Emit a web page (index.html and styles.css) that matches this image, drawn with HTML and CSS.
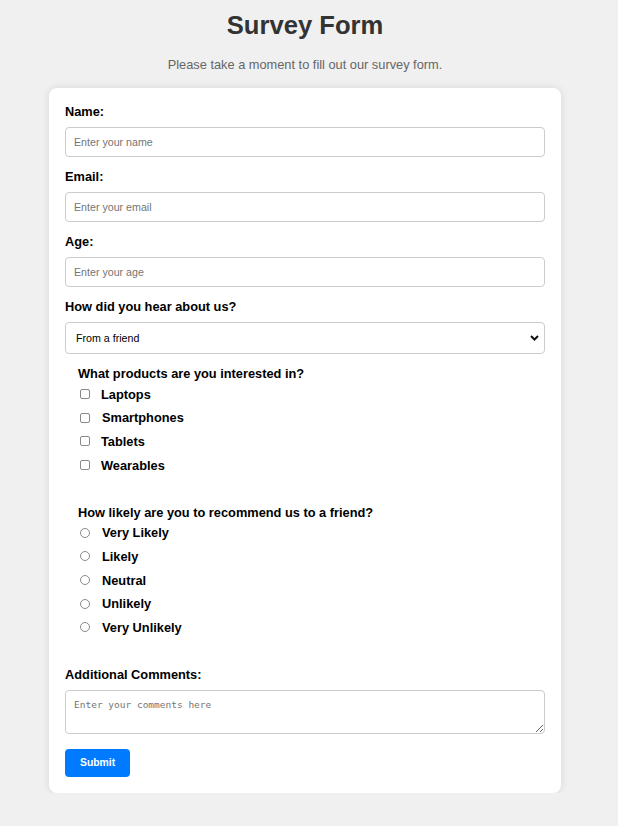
FILE: index.html
```html
<!DOCTYPE html>
<html lang="en">
<head>
<meta charset="utf-8">
<title>Survey Form</title>
<link rel="stylesheet" href="styles.css">
</head>
<body>
<div class="page">
  <h1 class="title">Survey Form</h1>
  <p class="subtitle">Please take a moment to fill out our survey form.</p>
  <form class="card">
    <label class="field-label" for="name">Name:</label>
    <input class="text-input" id="name" type="text" placeholder="Enter your name">

    <label class="field-label" for="email">Email:</label>
    <input class="text-input" id="email" type="email" placeholder="Enter your email">

    <label class="field-label" for="age">Age:</label>
    <input class="text-input" id="age" type="number" placeholder="Enter your age">

    <label class="field-label" for="source">How did you hear about us?</label>
    <div class="select-wrap">
      <select class="select" id="source">
        <option>From a friend</option>
        <option>Social media</option>
        <option>Advertisement</option>
      </select>
      <svg class="chevron" width="9" height="6" viewBox="0 0 9 6"><path d="M1 1 L4.5 4.5 L8 1" fill="none" stroke="#111" stroke-width="2"/></svg>
    </div>

    <div class="group">
      <div class="group-title">What products are you interested in?</div>
      <div class="options">
        <label class="option"><input type="checkbox" class="check"><span class="option-text">Laptops</span></label>
        <label class="option"><input type="checkbox" class="check"><span class="option-text wide">Smartphones</span></label>
        <label class="option"><input type="checkbox" class="check"><span class="option-text">Tablets</span></label>
        <label class="option"><input type="checkbox" class="check"><span class="option-text">Wearables</span></label>
      </div>
    </div>

    <div class="group">
      <div class="group-title">How likely are you to recommend us to a friend?</div>
      <div class="options">
        <label class="option"><input type="radio" name="rec" class="radio"><span class="option-text wide">Very Likely</span></label>
        <label class="option"><input type="radio" name="rec" class="radio"><span class="option-text wide">Likely</span></label>
        <label class="option"><input type="radio" name="rec" class="radio"><span class="option-text wide">Neutral</span></label>
        <label class="option"><input type="radio" name="rec" class="radio"><span class="option-text wide">Unlikely</span></label>
        <label class="option"><input type="radio" name="rec" class="radio"><span class="option-text wide">Very Unlikely</span></label>
      </div>
    </div>

    <label class="field-label" for="comments">Additional Comments:</label>
    <textarea class="textarea" id="comments" placeholder="Enter your comments here"></textarea>

    <button class="submit" type="submit">Submit</button>
  </form>
</div>
</body>
</html>
```

FILE: styles.css
```css
* { box-sizing: border-box; }

html, body {
  margin: 0;
  padding: 0;
  background: #f0f0f0;
  font-family: "Liberation Sans", Arial, sans-serif;
}

.page {
  width: 610px;
  padding-top: 11px;
  display: flex;
  flex-direction: column;
  align-items: center;
}

.title {
  margin: 0;
  font-size: 25.6px;
  line-height: 29.4px;
  font-weight: bold;
  color: #333;
}

.subtitle {
  margin: 18px 0 0 0;
  font-size: 12.8px;
  line-height: 14.7px;
  color: #666;
}

.card {
  margin-top: 15px;
  width: 512px;
  background: #fff;
  border-radius: 8px;
  box-shadow: 0 0 8px rgba(0, 0, 0, 0.1);
  padding: 16px;
  display: flex;
  flex-direction: column;
  align-items: stretch;
}

.field-label {
  display: block;
  font-size: 12.8px;
  line-height: 15px;
  font-weight: bold;
  color: #000;
  margin-bottom: 8px;
}

.text-input {
  display: block;
  width: 100%;
  height: 30px;
  border: 1px solid #ccc;
  border-radius: 4px;
  padding: 0 8px;
  font-family: "Liberation Sans", Arial, sans-serif;
  font-size: 10.67px;
  color: #000;
  margin: 0 0 12px 0;
  background: #fff;
  outline: none;
  -moz-appearance: textfield;
}

.text-input::-webkit-outer-spin-button,
.text-input::-webkit-inner-spin-button {
  -webkit-appearance: none;
  margin: 0;
}

.text-input::placeholder,
.textarea::placeholder {
  color: #757575;
}

.select-wrap {
  position: relative;
  margin-bottom: 12px;
}

.select {
  display: block;
  width: 100%;
  height: 32px;
  border: 1px solid #ccc;
  border-radius: 4px;
  padding: 0 20px 0 10px;
  font-family: "Liberation Sans", Arial, sans-serif;
  font-size: 10.67px;
  color: #000;
  background: #fff;
  -webkit-appearance: none;
  appearance: none;
  outline: none;
}

.chevron {
  position: absolute;
  right: 6px;
  top: 13px;
}

.group {
  padding-left: 13px;
  margin-bottom: 31.5px;
}

.group-title {
  font-size: 12.8px;
  line-height: 15px;
  font-weight: bold;
  color: #000;
  margin-bottom: 5px;
}

.options {
  display: flex;
  flex-direction: column;
  gap: 7.7px;
}

.option {
  display: flex;
  align-items: center;
  height: 16px;
  font-size: 12.8px;
  font-weight: bold;
  color: #000;
}

.check,
.radio {
  -webkit-appearance: none;
  appearance: none;
  width: 10px;
  height: 10px;
  margin: 0 0 0 1.5px;
  border: 1px solid #8a8a8a;
  background: #fff;
  flex: none;
}

.check {
  border-radius: 2px;
}

.radio {
  border-radius: 50%;
}

.option-text {
  margin-left: 11.5px;
}

.option-text.wide {
  margin-left: 12.5px;
}

.textarea {
  display: block;
  width: 100%;
  height: 44px;
  border: 1px solid #ccc;
  border-radius: 4px;
  padding: 8px;
  font-family: "DejaVu Sans Mono", "Liberation Mono", monospace;
  font-size: 9.5px;
  line-height: 12px;
  resize: vertical;
  margin: 0 0 15px 0;
  outline: none;
}

.submit {
  align-self: flex-start;
  height: 28px;
  padding: 0 15px;
  background: #007bff;
  color: #fff;
  border: none;
  border-radius: 4px;
  font-family: "Liberation Sans", Arial, sans-serif;
  font-size: 10.4px;
  font-weight: bold;
  cursor: pointer;
}
```
